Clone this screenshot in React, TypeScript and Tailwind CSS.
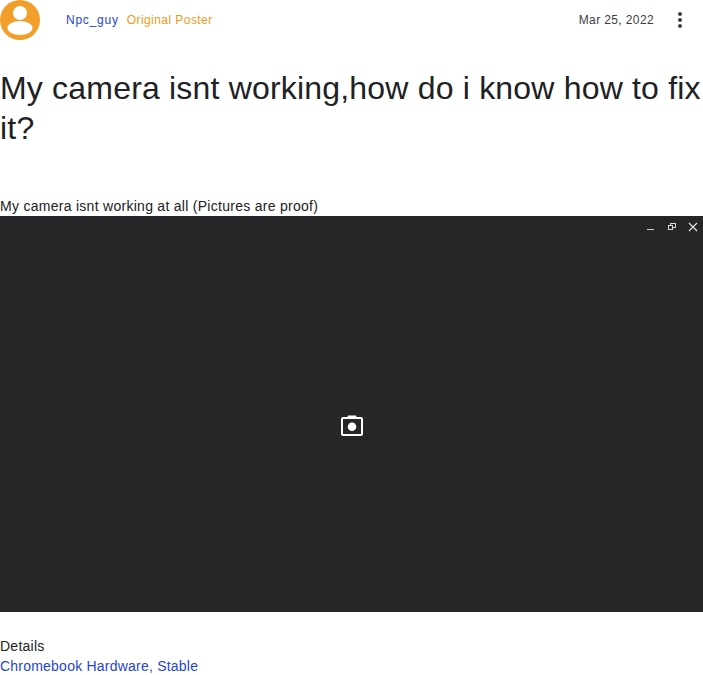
export default function App() {
  return (
    <div className="w-[703px] h-[675px] overflow-hidden bg-white font-['Liberation_Sans',Arial,sans-serif] text-[#202124]">
      <header className="flex items-center h-10">
        <svg width="40" height="40" viewBox="0 0 40 40" className="shrink-0">
          <circle cx="20" cy="20" r="20" fill="#F19E2A" />
          <circle cx="20" cy="13" r="7" fill="#fff" />
          <ellipse cx="20" cy="28" rx="12.5" ry="7" fill="#fff" />
        </svg>
        <span className="ml-[26px] text-xs tracking-[0.76px] text-[#1f45d3]">Npc_guy</span>
        <span className="ml-2 text-xs tracking-[0.44px] text-[#ee9a1c] mb-[1px]">Original Poster</span>
        <span className="ml-auto text-xs tracking-[0.38px] text-[#3c4043]">Mar 25, 2022</span>
        <svg width="4" height="16" viewBox="0 0 4 16" className="ml-[24px] mr-[21px] shrink-0" fill="#3c4043">
          <circle cx="2" cy="2" r="2" />
          <circle cx="2" cy="8" r="2" />
          <circle cx="2" cy="14" r="2" />
        </svg>
      </header>
      <h1 className="mt-[28px] text-[32px] leading-[40px] font-normal tracking-[0.19px] text-[#202124]">My camera isnt working,how do i know how to fix it?</h1>
      <p className="mt-[48px] text-sm leading-5 h-5 tracking-[0.28px] text-[#202124]">My camera isnt working at all (Pictures are proof)</p>
      <div className="relative h-[396px] bg-[#262628] flex items-center justify-center">
        <div className="absolute top-0 right-0 h-[22px] flex items-center">
          <svg width="10" height="10" viewBox="0 0 10 10" className="mr-[12px]">
            <rect x="2" y="7" width="7" height="1" fill="#d0d0d0" />
          </svg>
          <svg width="10" height="10" viewBox="0 0 10 10" className="mr-[11px]" fill="none" stroke="#d8d8d8">
            <rect x="3.5" y="1.5" width="5" height="4" />
            <rect x="1.5" y="3.5" width="4" height="4" fill="#262628" />
          </svg>
          <svg width="10" height="10" viewBox="0 0 10 10" className="mr-[5px]" stroke="#e8e8e8" strokeWidth="1.1">
            <path d="M1 1 9 9M9 1 1 9" />
          </svg>
        </div>
        <svg width="22" height="21" viewBox="0 0 22 21" className="mt-[23px]">
          <path d="M6 3 7 0.5h8l1 2.5z" fill="#fff" />
          <rect x="1" y="3" width="20" height="17" rx="1" fill="none" stroke="#fff" strokeWidth="2" />
          <circle cx="11" cy="11.7" r="4.3" fill="#fff" />
        </svg>
      </div>
      <p className="mt-6 text-sm leading-5 tracking-[0.25px] text-[#202124]">Details</p>
      <p className="text-sm leading-5 tracking-[0.22px] text-[#1f45d3]">Chromebook Hardware, Stable</p>
    </div>
  );
}
